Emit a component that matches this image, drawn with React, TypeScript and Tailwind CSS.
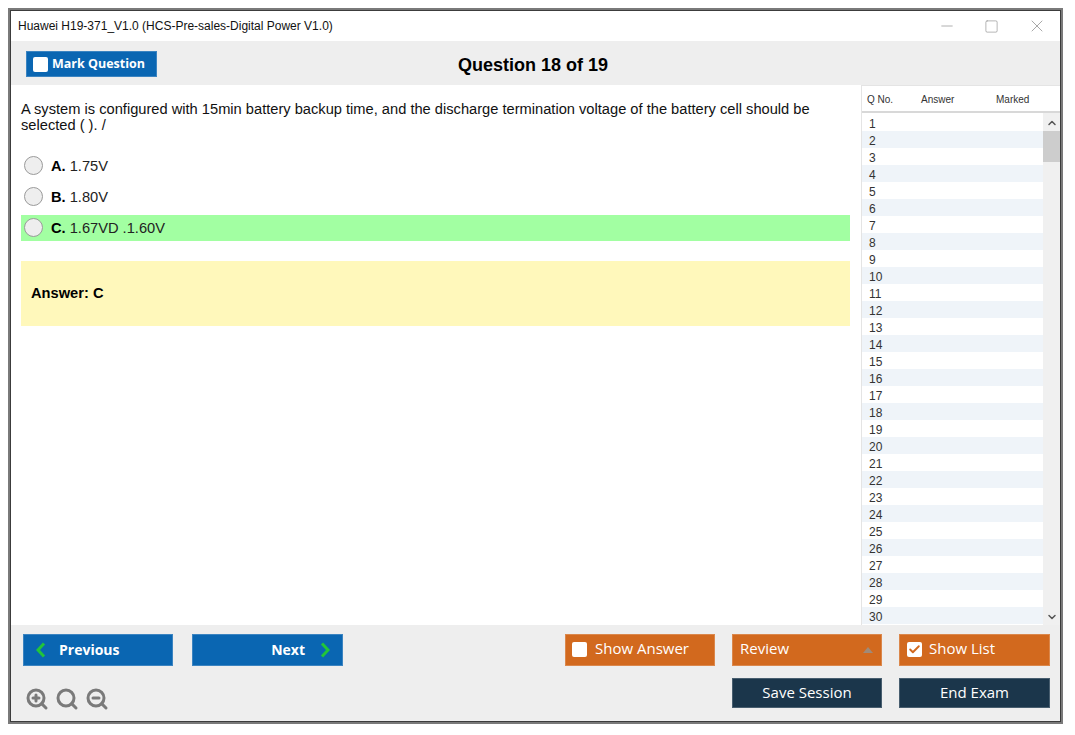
import React from "react";
import { ChevronUp, ChevronDown, Check, ZoomIn, ZoomOut, Search, Minus, Square, X } from "lucide-react";

const btn = "flex items-center text-white border border-white/20 font-['Open_Sans',sans-serif]";

function Box({ checked }: { checked?: boolean }) {
  return (
    <span className="flex items-center justify-center w-[15px] h-[15px] bg-white rounded-[2px] shrink-0">
      {checked ? <Check size={13} strokeWidth={3.5} className="text-[#d2691e]" /> : null}
    </span>
  );
}

function Chevron({ right }: { right?: boolean }) {
  return (
    <svg width="10" height="16" viewBox="0 0 10 16" fill="none" stroke="#22c53a" strokeWidth="3" className="shrink-0">
      <path d={right ? "M2 1.5 L8 8 L2 14.5" : "M8 1.5 L2 8 L8 14.5"} />
    </svg>
  );
}

function Option({ letter, text, green }: { letter: string; text: string; green?: boolean }) {
  return (
    <div className={`flex items-center h-[26px] w-[829px] ${green ? "bg-[#a2ffa2]" : ""}`}>
      <span className="ml-[3px] mb-[2px] w-[19px] h-[19px] rounded-full bg-[#eeeeee] border border-[#9a9a9a] shrink-0" />
      <span className="ml-[8px] text-[14.67px] font-bold text-black">{letter}</span>
      <span className="ml-[4px] text-[14.67px] text-[#222222]">{text}</span>
    </div>
  );
}

export default function App() {
  const rows = Array.from({ length: 30 }, (_, i) => i + 1);
  return (
    <div className="w-[1075px] h-[735px] bg-white pt-[8px] pl-[8px] font-['Liberation_Sans',Arial,sans-serif]">
      <div className="w-[1055px] h-[716px] border-2 border-[#7a7a7a]">
        <div className="w-full h-full border border-[#3c3c3c] bg-white flex flex-col overflow-hidden">
          <div className="h-[30px] flex items-center shrink-0 pl-[7px]">
            <span className="text-[12px] text-[#111111]">Huawei H19-371_V1.0 (HCS-Pre-sales-Digital Power V1.0)</span>
            <div className="ml-auto flex items-center text-[#8a8a8a]">
              <Minus size={18} strokeWidth={0.9} className="mr-[28px]" />
              <Square size={15} strokeWidth={1} className="mr-[28px]" />
              <X size={20} strokeWidth={0.9} className="mr-[13px]" />
            </div>
          </div>

          <div className="h-[44px] bg-[#eeeeee] flex items-center shrink-0 pl-[15px]">
            <button className="flex items-center h-[26px] w-[131px] mt-[2px] bg-[#0a66b2] text-white border border-white/20 pl-[6px] gap-[4px] text-[12.5px] font-bold font-['Open_Sans',sans-serif]">
              <Box />
              <span className="mt-[1px]">Mark Question</span>
            </button>
            <span className="ml-[301px] mt-[5px] text-[18px] font-bold text-black">Question 18 of 19</span>
          </div>

          <div className="h-[540px] flex shrink-0">
            <div className="w-[850px] pl-[10px] pt-[16px] shrink-0">
              <p className="text-[14.67px] leading-[16px] text-[#111111] w-[810px]">
                A system is configured with 15min battery backup time, and the discharge termination voltage of the battery cell should be selected ( ). /
              </p>
              <div className="mt-[20px] flex flex-col gap-[5px]">
                <Option letter="A." text="1.75V" />
                <Option letter="B." text="1.80V" />
                <Option letter="C." text="1.67VD .1.60V" green />
              </div>
              <div className="mt-[20px] w-[829px] h-[65px] bg-[#fff8bb] flex items-center pl-[10px] pb-[2px] text-[14.67px] font-bold text-black">
                Answer: C
              </div>
            </div>

            <div className="flex-1 flex flex-col border-l border-[#e4e4e4] min-w-0">
              <div className="h-[28px] flex items-center shrink-0 border-t border-[#e4e4e4] border-b-2 border-b-[#d8d8d8] pt-[1px] text-[10px] text-[#333333] pl-[5px]">
                <span className="w-[54px]">Q No.</span>
                <span className="w-[75px]">Answer</span>
                <span>Marked</span>
              </div>
              <div className="flex flex-1 min-h-0 overflow-hidden">
                <div className="w-[181px] shrink-0 overflow-hidden pt-[1px]">
                  {rows.map((n) => (
                    <div key={n} className={`h-[17px] flex items-center pl-[7px] pt-[2px] text-[12px] text-[#333333] ${n % 2 === 0 ? "bg-[#eff4f9]" : "bg-white"}`}>
                      {n}
                    </div>
                  ))}
                </div>
                <div className="flex-1 bg-[#f0f0f0] flex flex-col items-center">
                  <ChevronUp size={12} strokeWidth={3} className="text-[#555555] mt-[4px]" />
                  <div className="w-full h-[31px] bg-[#cdcdcd] mt-[2px]" />
                  <ChevronDown size={12} strokeWidth={3} className="text-[#555555] mt-auto mb-[2px]" />
                </div>
              </div>
            </div>
          </div>

          <div className="flex-1 bg-[#eeeeee] flex justify-between pl-[12px] pr-[10px] pt-[9px] min-h-0">
            <div className="flex flex-col">
              <div className="flex gap-[19px]">
                <button className={`${btn} h-[32px] w-[150px] bg-[#0a66b2] pl-[12px] gap-[13px] text-[14px] font-bold`}>
                  <Chevron />
                  <span className="mb-[1px]">Previous</span>
                </button>
                <button className={`${btn} h-[32px] w-[151px] bg-[#0a66b2] justify-end pr-[12px] gap-[15px] text-[14px] font-bold`}>
                  <span className="mb-[1px]">Next</span>
                  <Chevron right />
                </button>
              </div>
              <div className="flex items-center gap-[6px] mt-[21px] text-[#7a7a7a] ml-[2px]">
                <ZoomIn size={24} strokeWidth={3} />
                <Search size={24} strokeWidth={3} />
                <ZoomOut size={24} strokeWidth={3} />
              </div>
            </div>
            <div className="flex flex-col items-end">
              <div className="flex gap-[17px]">
                <button className={`${btn} h-[32px] w-[150px] bg-[#d2691e] pl-[6px] text-[15px]`}>
                  <span className="mb-[2px]"><Box /></span>
                  <span className="ml-[8px] mb-[3px]">Show Answer</span>
                </button>
                <button className={`${btn} h-[32px] w-[150px] bg-[#d2691e] pl-[7px] pr-[8px] justify-between text-[15px]`}>
                  <span className="mb-[3px]">Review</span>
                  <span className="w-0 h-0 border-l-[5px] border-r-[5px] border-b-[6px] border-l-transparent border-r-transparent border-b-[#a08a78]" />
                </button>
                <button className={`${btn} h-[32px] w-[151px] bg-[#d2691e] pl-[7px] text-[15px]`}>
                  <span className="mb-[2px]"><Box checked /></span>
                  <span className="ml-[7px] mb-[3px]">Show List</span>
                </button>
              </div>
              <div className="flex gap-[17px] mt-[12px]">
                <button className={`${btn} h-[30px] w-[150px] bg-[#1b364b] justify-center pb-[2px] text-[15px]`}>Save Session</button>
                <button className={`${btn} h-[30px] w-[151px] bg-[#1b364b] justify-center pb-[2px] text-[15px]`}>End Exam</button>
              </div>
            </div>
          </div>
        </div>
      </div>
    </div>
  );
}
